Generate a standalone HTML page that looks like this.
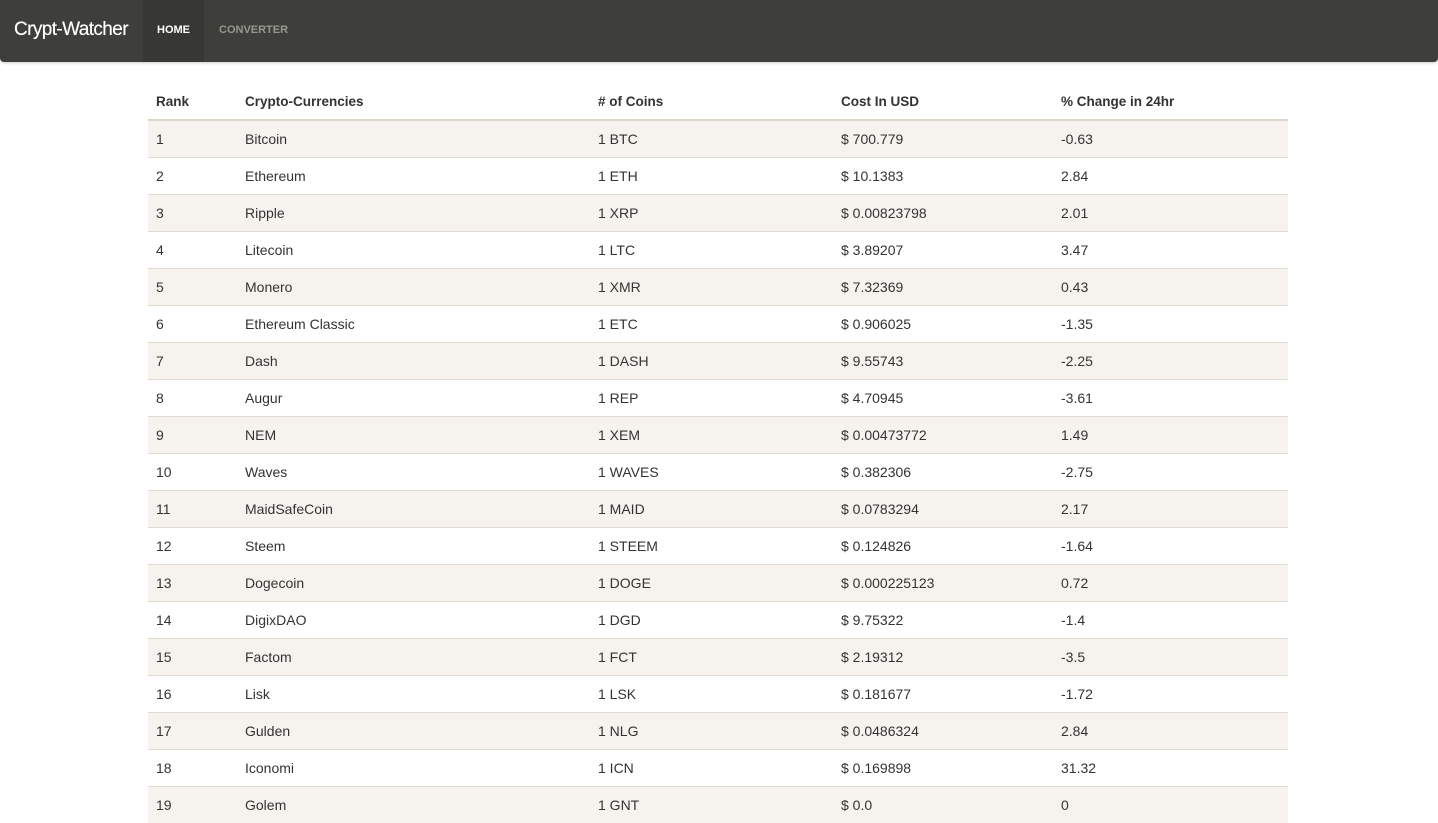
<!DOCTYPE html>
<html><head><meta charset="utf-8"><style>
*{margin:0;padding:0;box-sizing:border-box}
body{width:1438px;height:790px;overflow:hidden;background:#fff;font-family:"Liberation Sans",sans-serif;color:#333;font-size:14px}
.nav{height:62px;background:#3e3e3a;border-radius:0 0 4px 4px;position:relative;box-shadow:0 1px 3px rgba(0,0,0,.2)}
.brand{position:absolute;left:14px;top:19px;color:#fff;font-size:19px;letter-spacing:-0.6px;text-shadow:0 0 0.4px #fff}
.home{position:absolute;left:143px;top:0;width:61px;height:62px;background:#373733;color:#fff;font-weight:bold;font-size:11px;text-align:center;line-height:61px}
.conv{position:absolute;left:219px;top:0;line-height:61px;color:#98978f;font-weight:bold;font-size:11px}
table{position:absolute;left:148px;top:83px;width:1140px;border-collapse:collapse}
th{text-align:left;font-weight:bold;padding:0 8px;height:37px;border-bottom:2px solid #ddd5c8;font-size:13.5px}
td{padding:0 8px;height:37px;border-top:1px solid #e2dace;font-size:14px}
tr:nth-child(odd) td{background:#f6f3ef}
</style></head><body>
<div class="nav"><div class="brand">Crypt-Watcher</div><div class="home">HOME</div><div class="conv">CONVERTER</div></div>
<table>
<colgroup><col style="width:89px"><col style="width:353px"><col style="width:243px"><col style="width:220px"><col></colgroup>
<thead><tr><th>Rank</th><th>Crypto-Currencies</th><th># of Coins</th><th>Cost In USD</th><th>% Change in 24hr</th></tr></thead>
<tbody>
<tr><td>1</td><td>Bitcoin</td><td>1 BTC</td><td>$ 700.779</td><td>-0.63</td></tr>
<tr><td>2</td><td>Ethereum</td><td>1 ETH</td><td>$ 10.1383</td><td>2.84</td></tr>
<tr><td>3</td><td>Ripple</td><td>1 XRP</td><td>$ 0.00823798</td><td>2.01</td></tr>
<tr><td>4</td><td>Litecoin</td><td>1 LTC</td><td>$ 3.89207</td><td>3.47</td></tr>
<tr><td>5</td><td>Monero</td><td>1 XMR</td><td>$ 7.32369</td><td>0.43</td></tr>
<tr><td>6</td><td>Ethereum Classic</td><td>1 ETC</td><td>$ 0.906025</td><td>-1.35</td></tr>
<tr><td>7</td><td>Dash</td><td>1 DASH</td><td>$ 9.55743</td><td>-2.25</td></tr>
<tr><td>8</td><td>Augur</td><td>1 REP</td><td>$ 4.70945</td><td>-3.61</td></tr>
<tr><td>9</td><td>NEM</td><td>1 XEM</td><td>$ 0.00473772</td><td>1.49</td></tr>
<tr><td>10</td><td>Waves</td><td>1 WAVES</td><td>$ 0.382306</td><td>-2.75</td></tr>
<tr><td>11</td><td>MaidSafeCoin</td><td>1 MAID</td><td>$ 0.0783294</td><td>2.17</td></tr>
<tr><td>12</td><td>Steem</td><td>1 STEEM</td><td>$ 0.124826</td><td>-1.64</td></tr>
<tr><td>13</td><td>Dogecoin</td><td>1 DOGE</td><td>$ 0.000225123</td><td>0.72</td></tr>
<tr><td>14</td><td>DigixDAO</td><td>1 DGD</td><td>$ 9.75322</td><td>-1.4</td></tr>
<tr><td>15</td><td>Factom</td><td>1 FCT</td><td>$ 2.19312</td><td>-3.5</td></tr>
<tr><td>16</td><td>Lisk</td><td>1 LSK</td><td>$ 0.181677</td><td>-1.72</td></tr>
<tr><td>17</td><td>Gulden</td><td>1 NLG</td><td>$ 0.0486324</td><td>2.84</td></tr>
<tr><td>18</td><td>Iconomi</td><td>1 ICN</td><td>$ 0.169898</td><td>31.32</td></tr>
<tr><td>19</td><td>Golem</td><td>1 GNT</td><td>$ 0.0</td><td>0</td></tr>
</tbody></table>
</body></html>
